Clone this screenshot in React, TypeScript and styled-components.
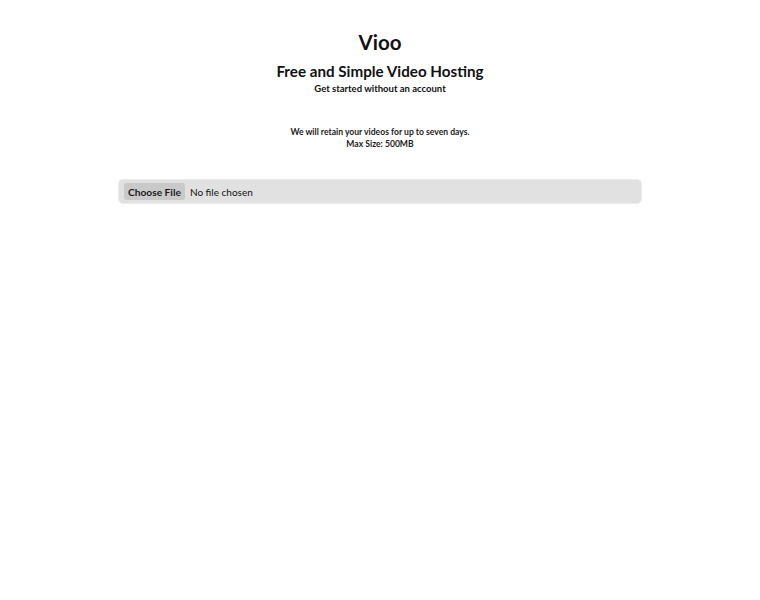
import React from 'react';
import styled, { createGlobalStyle } from 'styled-components';

const GlobalStyle = createGlobalStyle`
  html, body {
    margin: 0;
    padding: 0;
    background: #ffffff;
  }
  body {
    font-family: Lato, "Noto Sans", sans-serif;
    color: #111111;
  }
`;

const Page = styled.main`
  display: flex;
  flex-direction: column;
  align-items: center;
  padding-top: 30px;
  text-align: center;
`;

const Brand = styled.h1`
  margin: 0;
  font-size: 20.5px;
  line-height: 24px;
  font-weight: 700;
`;

const Tagline = styled.h2`
  margin: 7px 0 0;
  font-size: 15.2px;
  line-height: 20px;
  font-weight: 700;
`;

const Lead = styled.p`
  margin: 1px 0 0;
  font-size: 9.5px;
  line-height: 14px;
  font-weight: 700;
`;

const Notes = styled.div`
  margin-top: 30px;
  display: flex;
  flex-direction: column;
`;

const Note = styled.p`
  margin: 0;
  font-size: 8.6px;
  line-height: 12px;
  font-weight: 700;
  color: #222222;
`;

const UploadBox = styled.label`
  margin-top: 29px;
  box-sizing: border-box;
  width: 524px;
  height: 25px;
  display: flex;
  align-items: center;
  padding: 0 5px;
  background: #e1e1e1;
  border: 1px solid #ececec;
  border-radius: 5px;
`;

const FileInput = styled.input`
  font-family: Lato, "Noto Sans", sans-serif;
  font-size: 10px;
  color: #111111;

  &::file-selector-button {
    font-family: Lato, "Noto Sans", sans-serif;
    font-size: 10.2px;
    font-weight: 700;
    color: #1a1a1a;
    background: #c9c9c9;
    border: none;
    border-radius: 3px;
    height: 17px;
    padding: 0 4px;
    margin-right: 5px;
  }
`;

export default function App() {
  return (
    <>
      <GlobalStyle />
      <Page>
        <Brand>Vioo</Brand>
        <Tagline>Free and Simple Video Hosting</Tagline>
        <Lead>Get started without an account</Lead>
        <Notes>
          <Note>We will retain your videos for up to seven days.</Note>
          <Note>Max Size: 500MB</Note>
        </Notes>
        <UploadBox>
          <FileInput type="file" accept="video/*" />
        </UploadBox>
      </Page>
    </>
  );
}
